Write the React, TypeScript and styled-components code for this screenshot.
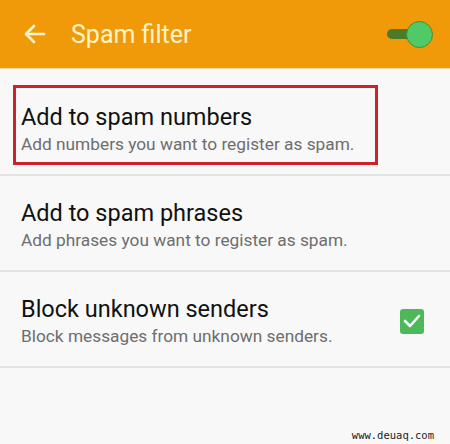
import styled, { createGlobalStyle } from 'styled-components';

//
//Page defaults
const GlobalStyle = createGlobalStyle`
    html, body {
        margin: 0;
        padding: 0;
        background: #f8f8f8;
    }
    body {
        font-family: Roboto, 'Noto Sans', sans-serif;
    }
`;

const Screen = styled.div`
    width: 450px;
    height: 444px;
    display: flex;
    flex-direction: column;
    background: #f8f8f8;
    overflow: hidden;
`;

//
//Orange app bar
const AppBar = styled.header`
    height: 68px;
    flex-shrink: 0;
    display: flex;
    align-items: center;
    padding: 0 17px 0 24px;
    background: #f09a0a;
    border-bottom: 1px solid #f3d9a8;
`;

const BackButton = styled.button`
    display: flex;
    align-items: center;
    padding: 0;
    border: none;
    background: none;
    color: #fff4c8;
`;

const Title = styled.h1`
    flex: 1;
    margin: 0 0 0 25px;
    font-size: 25px;
    font-weight: 400;
    color: #fff4c8;
`;

const Switch = styled.div`
    position: relative;
    width: 46px;
    height: 27px;
    display: flex;
    align-items: center;
`;

const Track = styled.div`
    width: 34px;
    height: 10px;
    border-radius: 5px;
    background: #4d7a26;
`;

const Knob = styled.div`
    position: absolute;
    right: 0;
    top: 0;
    width: 25px;
    height: 25px;
    border-radius: 50%;
    background: #4fca66;
    border: 1px solid #3f8f3a;
`;

//
//Settings list
const List = styled.div`
    display: flex;
    flex-direction: column;
`;

const Row = styled.div<{ $highlight?: boolean }>`
    display: flex;
    align-items: center;
    padding: ${(p) => (p.$highlight ? '16px 0 9px 13px' : '23px 21px 19px')};
    border-bottom: 2px solid #e3e3e3;
`;

const TextBlock = styled.div<{ $highlight?: boolean }>`
    flex: ${(p) => (p.$highlight ? '0 0 auto' : '1')};
    width: ${(p) => (p.$highlight ? '354px' : 'auto')};
    padding: ${(p) => (p.$highlight ? '15px 0 7px 5px' : '0')};
    border: ${(p) => (p.$highlight ? '3px solid #d0202c' : 'none')};
`;

const ItemTitle = styled.div`
    font-size: 23.5px;
    line-height: 28px;
    color: #111;
`;

const ItemSub = styled.div`
    margin-top: 2px;
    font-size: 17.3px;
    line-height: 22px;
    color: #6e6e6e;
`;

const CheckBox = styled.div`
    width: 24px;
    height: 25px;
    margin-right: 5px;
    border-radius: 3px;
    background: #4cb85a;
    display: flex;
    align-items: center;
    justify-content: center;
`;

const Footer = styled.div`
    flex: 1;
    display: flex;
    align-items: flex-end;
    justify-content: flex-end;
    padding: 0 16px 3px 0;
`;

const Watermark = styled.span`
    font-family: 'DejaVu Sans Mono', monospace;
    font-size: 10.5px;
    color: #222;
`;

const items = [
    { title: 'Add to spam numbers', sub: 'Add numbers you want to register as spam.', highlight: true },
    { title: 'Add to spam phrases', sub: 'Add phrases you want to register as spam.' },
    { title: 'Block unknown senders', sub: 'Block messages from unknown senders.', checked: true },
];

const App = () => {
    return (
        <Screen>
            <GlobalStyle />
            <AppBar>
                <BackButton aria-label="Back">
                    <svg width="22" height="20" viewBox="0 0 22 20" fill="none" stroke="currentColor" strokeWidth="2.6" strokeLinecap="round" strokeLinejoin="round">
                        <path d="M20 10H3" />
                        <path d="M10 2L2 10l8 8" />
                    </svg>
                </BackButton>
                <Title>Spam filter</Title>
                <Switch>
                    <Track />
                    <Knob />
                </Switch>
            </AppBar>
            <List>
                {items.map((item) => (
                    <Row key={item.title} $highlight={item.highlight}>
                        <TextBlock $highlight={item.highlight}>
                            <ItemTitle>{item.title}</ItemTitle>
                            <ItemSub>{item.sub}</ItemSub>
                        </TextBlock>
                        {item.checked && (
                            <CheckBox>
                                <svg width="18" height="14" viewBox="0 0 18 14" fill="none" stroke="#fff" strokeWidth="2.6" strokeLinecap="round" strokeLinejoin="round">
                                    <path d="M2 7l5 5 9-10" />
                                </svg>
                            </CheckBox>
                        )}
                    </Row>
                ))}
            </List>
            <Footer>
                <Watermark>www.deuaq.com</Watermark>
            </Footer>
        </Screen>
    );
};

export default App;
